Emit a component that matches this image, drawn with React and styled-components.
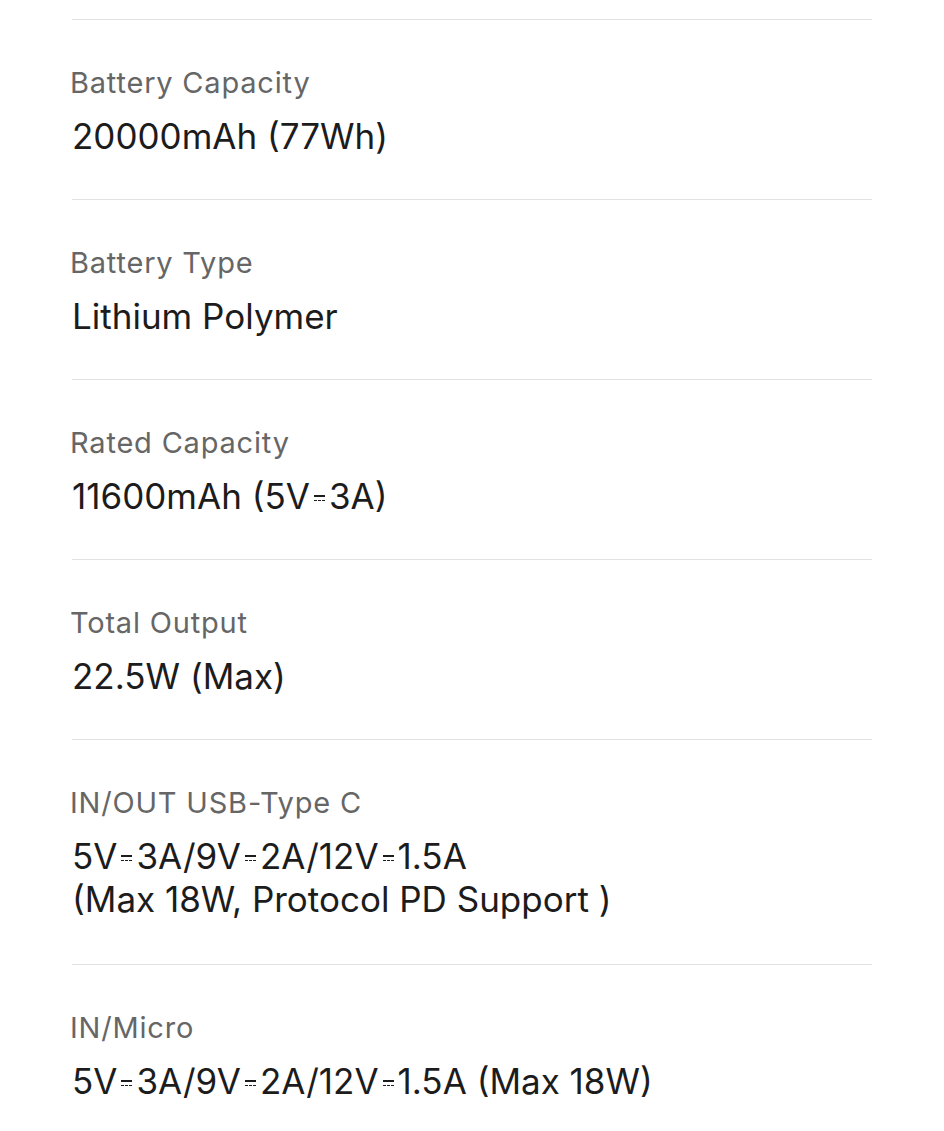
import React from "react";
import styled, { createGlobalStyle } from "styled-components";

const Global = createGlobalStyle`
  html, body { margin: 0; padding: 0; background: #ffffff; }
  body { font-family: Inter, Roboto, "Noto Sans", Arial, sans-serif; -webkit-font-smoothing: antialiased; }
`;

const Page = styled.div`
  padding: 19px 72px 0 72px;
  width: 800px;
`;

const Row = styled.section`
  border-top: 1px solid #e2e2e2;
  padding: 45px 0 ${(p) => (p.$tall ? 43 : 41)}px 0;
  display: flex;
  flex-direction: column;
  gap: 15px;
`;

const Label = styled.div`
  font-size: 29px;
  line-height: 35px;
  color: #666666;
  margin-left: -2px;
  letter-spacing: 0.8px;
`;

const Value = styled.div`
  font-size: 35px;
  line-height: 43px;
  color: #1c1c1c;
`;

const DC = styled.span`
  display: inline-block;
  width: 11px;
  height: 6px;
  margin: 0 4px;
  vertical-align: 0.22em;
  border-top: 2px solid currentColor;
  box-sizing: border-box;
  background: repeating-linear-gradient(90deg, currentColor 0 3px, transparent 3px 4px) bottom / 100% 1.5px no-repeat;
`;

const dcText = (s) =>
  s.split("⎓").flatMap((part, i) => (i === 0 ? [part] : [<DC key={i} aria-label="⎓" />, part]));

const specs = [
  { label: "Battery Capacity", value: ["20000mAh (77Wh)"] },
  { label: "Battery Type", value: ["Lithium Polymer"] },
  { label: "Rated Capacity", value: ["11600mAh (5V⎓3A)"] },
  { label: "Total Output", value: ["22.5W (Max)"] },
  { label: "IN/OUT USB-Type C", value: ["5V⎓3A/9V⎓2A/12V⎓1.5A", "(Max 18W, Protocol PD Support )"] },
  { label: "IN/Micro", value: ["5V⎓3A/9V⎓2A/12V⎓1.5A (Max 18W)"] },
];

export default function App() {
  return (
    <>
      <Global />
      <Page>
        {specs.map((s) => (
          <Row key={s.label} $tall={s.value.length > 1}>
            <Label>{s.label}</Label>
            <Value>
              {s.value.map((line, i) => (
                <div key={i}>{dcText(line)}</div>
              ))}
            </Value>
          </Row>
        ))}
      </Page>
    </>
  );
}
